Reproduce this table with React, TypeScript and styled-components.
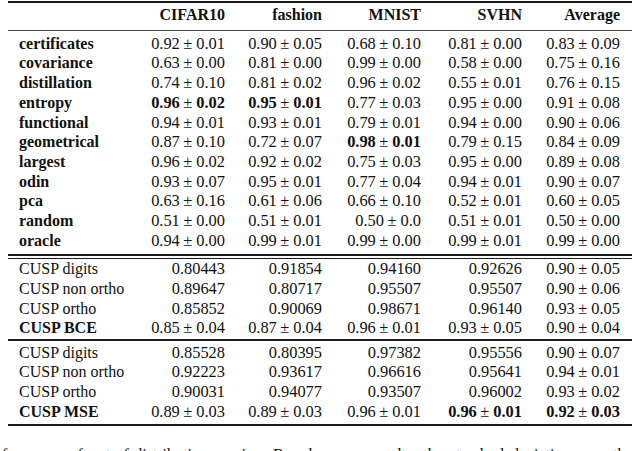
import styled, { createGlobalStyle } from 'styled-components';

const GlobalStyle = createGlobalStyle`
  html, body {
    margin: 0;
    padding: 0;
    background: #ffffff;
  }
  body {
    font-family: "Liberation Serif", "Times New Roman", serif;
    color: #111;
    overflow: hidden;
  }
`;

const Page = styled.div`
  width: 640px;
  height: 451px;
  overflow: hidden;
`;

const Table = styled.div`
  width: 624px;
  margin-left: 8px;
  padding-top: 1px;
`;

const Rule = styled.div<{ $thick?: number; $before?: number; $after?: number; $tone?: string }>`
  height: ${(p) => p.$thick ?? 1}px;
  background: ${(p) => p.$tone ?? '#1a1a1a'};
  margin-top: ${(p) => p.$before ?? 0}px;
  margin-bottom: ${(p) => p.$after ?? 0}px;
`;

const Row = styled.div<{ $header?: boolean }>`
  display: grid;
  grid-template-columns: 129px 99px 97px 99px 101px 99px;
  height: ${(p) => (p.$header ? '26px' : '19.7px')};
  line-height: ${(p) => (p.$header ? '24px' : '19.7px')};
  align-items: start;
`;

const Label = styled.div<{ $bold?: boolean }>`
  padding-left: 11px;
  font-size: 16px;
  font-weight: ${(p) => (p.$bold ? 700 : 400)};
  white-space: nowrap;
`;

const HeadCell = styled.div<{ $last?: boolean }>`
  text-align: right;
  padding-right: ${(p) => (p.$last ? 12 : 11)}px;
  font-size: 16px;
  font-weight: 700;
  white-space: nowrap;
`;

const Cell = styled.div<{ $last?: boolean; $bold?: boolean }>`
  text-align: right;
  padding-right: ${(p) => (p.$last ? 12 : 11)}px;
  font-size: 16.4px;
  font-weight: ${(p) => (p.$bold ? 700 : 400)};
  white-space: nowrap;
`;

const PlusMinus = styled.span`
  font-weight: 400;
  margin: 0 4px 0 3.5px;
`;

const Caption = styled.p`
  margin: 19px 0 0 2px;
  font-size: 16px;
  line-height: 20px;
  white-space: nowrap;
  word-spacing: 3px;
`;

type RowData = { label: string; bold?: boolean; cells: string[] };

const heads = ['CIFAR10', 'fashion', 'MNIST', 'SVHN', 'Average'];

const methods: RowData[] = [
  { label: 'certificates', bold: true, cells: ['0.92±0.01', '0.90±0.05', '0.68±0.10', '0.81±0.00', '0.83±0.09'] },
  { label: 'covariance', bold: true, cells: ['0.63±0.00', '0.81±0.00', '0.99±0.00', '0.58±0.00', '0.75±0.16'] },
  { label: 'distillation', bold: true, cells: ['0.74±0.10', '0.81±0.02', '0.96±0.02', '0.55±0.01', '0.76±0.15'] },
  { label: 'entropy', bold: true, cells: ['*0.96±0.02', '*0.95±0.01', '0.77±0.03', '0.95±0.00', '0.91±0.08'] },
  { label: 'functional', bold: true, cells: ['0.94±0.01', '0.93±0.01', '0.79±0.01', '0.94±0.00', '0.90±0.06'] },
  { label: 'geometrical', bold: true, cells: ['0.87±0.10', '0.72±0.07', '*0.98±0.01', '0.79±0.15', '0.84±0.09'] },
  { label: 'largest', bold: true, cells: ['0.96±0.02', '0.92±0.02', '0.75±0.03', '0.95±0.00', '0.89±0.08'] },
  { label: 'odin', bold: true, cells: ['0.93±0.07', '0.95±0.01', '0.77±0.04', '0.94±0.01', '0.90±0.07'] },
  { label: 'pca', bold: true, cells: ['0.63±0.16', '0.61±0.06', '0.66±0.10', '0.52±0.01', '0.60±0.05'] },
  { label: 'random', bold: true, cells: ['0.51±0.00', '0.51±0.01', '0.50±0.0', '0.51±0.01', '0.50±0.00'] },
  { label: 'oracle', bold: true, cells: ['0.94±0.00', '0.99±0.01', '0.99±0.00', '0.99±0.01', '0.99±0.00'] },
];

const bce: RowData[] = [
  { label: 'CUSP digits', cells: ['0.80443', '0.91854', '0.94160', '0.92626', '0.90±0.05'] },
  { label: 'CUSP non ortho', cells: ['0.89647', '0.80717', '0.95507', '0.95507', '0.90±0.06'] },
  { label: 'CUSP ortho', cells: ['0.85852', '0.90069', '0.98671', '0.96140', '0.93±0.05'] },
  { label: 'CUSP BCE', bold: true, cells: ['0.85±0.04', '0.87±0.04', '0.96±0.01', '0.93±0.05', '0.90±0.04'] },
];

const mse: RowData[] = [
  { label: 'CUSP digits', cells: ['0.85528', '0.80395', '0.97382', '0.95556', '0.90±0.07'] },
  { label: 'CUSP non ortho', cells: ['0.92223', '0.93617', '0.96616', '0.95641', '0.94±0.01'] },
  { label: 'CUSP ortho', cells: ['0.90031', '0.94077', '0.93507', '0.96002', '0.93±0.02'] },
  { label: 'CUSP MSE', bold: true, cells: ['0.89±0.03', '0.89±0.03', '0.96±0.01', '*0.96±0.01', '*0.92±0.03'] },
];

function Value({ raw, last }: { raw: string; last: boolean }) {
  const bold = raw.startsWith('*');
  const text = bold ? raw.slice(1) : raw;
  const [mean, std] = text.split('±');
  return (
    <Cell $bold={bold} $last={last}>
      {mean}
      {std !== undefined && (
        <>
          <PlusMinus>±</PlusMinus>
          {std}
        </>
      )}
    </Cell>
  );
}

function Rows({ data }: { data: RowData[] }) {
  return (
    <>
      {data.map((r, i) => (
        <Row key={i}>
          <Label $bold={r.bold}>{r.label}</Label>
          {r.cells.map((c, j) => (
            <Value key={j} raw={c} last={j === r.cells.length - 1} />
          ))}
        </Row>
      ))}
    </>
  );
}

export default function App() {
  return (
    <Page>
      <GlobalStyle />
      <Table>
        <Rule $thick={2} />
        <Row $header>
          <Label />
          {heads.map((h, i) => (
            <HeadCell key={h} $last={i === heads.length - 1}>
              {h}
            </HeadCell>
          ))}
        </Row>
        <Rule $thick={1.3} $before={0.5} $after={3} $tone="#444" />
        <Rows data={methods} />
        <Rule $thick={2} $before={4} $after={1.8} />
        <Rule $thick={1.2} $after={0} />
        <Rows data={bce} />
        <Rule $thick={1.5} $before={1} $after={2} />
        <Rows data={mse} />
        <Rule $thick={2} $before={2.5} />
      </Table>
      <Caption>
        formance of out-of-distribution scoring. Based on our results, the standard deviation over the different
      </Caption>
    </Page>
  );
}
